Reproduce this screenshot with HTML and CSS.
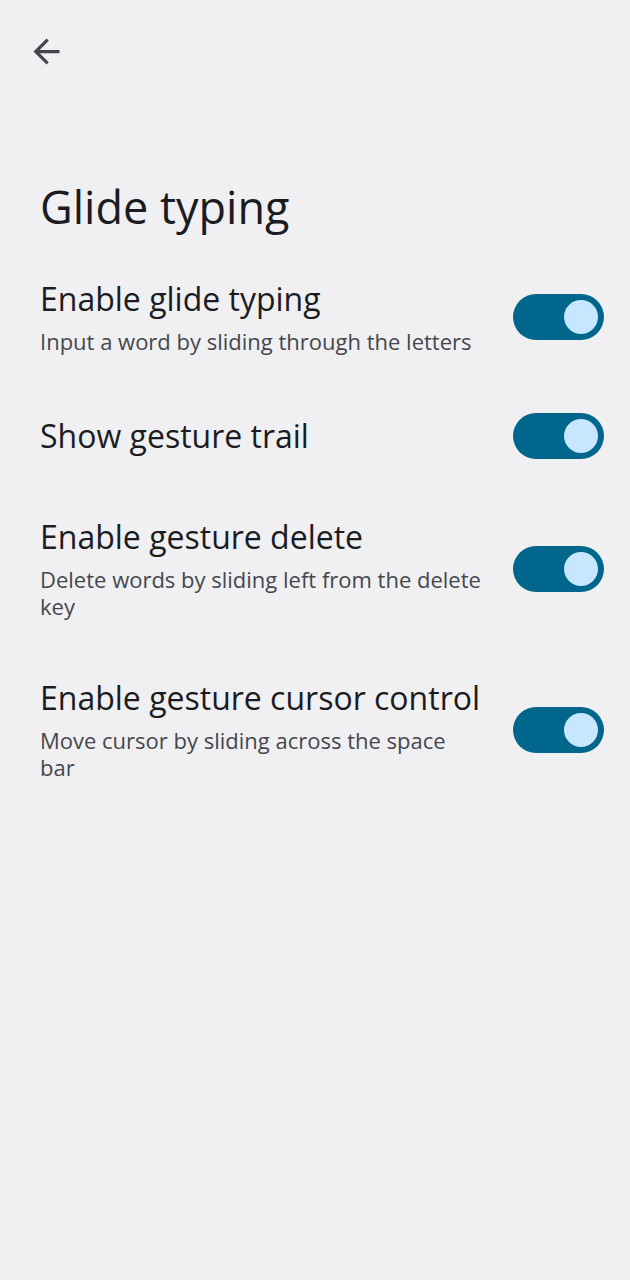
FILE: index.html
```html
<!DOCTYPE html>
<html>
<head>
<meta charset="utf-8">
<link rel="stylesheet" href="styles.css">
</head>
<body>
<div class="page">
  <div class="topbar">
    <button class="back" aria-label="Back">
      <svg viewBox="0 0 24 24" width="39" height="39"><path d="M20 11H7.83l5.59-5.59L12 4l-8 8 8 8 1.41-1.41L7.83 13H20v-2z" fill="#43464c"/></svg>
    </button>
  </div>
  <h1 class="title">Glide typing</h1>
  <div class="list">
    <div class="item">
      <div class="texts">
        <div class="item-title">Enable glide typing</div>
        <div class="item-summary">Input a word by sliding through the letters</div>
      </div>
      <div class="switch"><div class="thumb"></div></div>
    </div>
    <div class="item">
      <div class="texts">
        <div class="item-title">Show gesture trail</div>
      </div>
      <div class="switch"><div class="thumb"></div></div>
    </div>
    <div class="item">
      <div class="texts">
        <div class="item-title">Enable gesture delete</div>
        <div class="item-summary">Delete words by sliding left from the delete key</div>
      </div>
      <div class="switch"><div class="thumb"></div></div>
    </div>
    <div class="item">
      <div class="texts">
        <div class="item-title">Enable gesture cursor control</div>
        <div class="item-summary">Move cursor by sliding across the space bar</div>
      </div>
      <div class="switch"><div class="thumb"></div></div>
    </div>
  </div>
</div>
</body>
</html>
```
FILE: styles.css
```css
html, body {
  margin: 0;
  padding: 0;
  background: #f0f0f3;
}
.page {
  width: 630px;
  min-height: 1280px;
  font-family: "Open Sans", "Noto Sans", sans-serif;
  color: #1b1c1f;
}
.topbar {
  display: flex;
  padding: 32px 0 0 27px;
}
.back {
  background: none;
  border: 0;
  padding: 0;
  width: 39px;
  height: 39px;
  display: flex;
}
.title {
  margin: 108px 0 0 40px;
  font-size: 45px;
  font-weight: 400;
  line-height: 56px;
}
.list {
  display: flex;
  flex-direction: column;
  margin-top: 15px;
}
.item {
  display: flex;
  align-items: center;
  padding: 29px 26px 29px 40px;
  gap: 29px;
}
.texts {
  flex: 1;
  min-width: 0;
}
.item-title {
  font-size: 32px;
  line-height: 40px;
}
.item-summary {
  margin-top: 9px;
  font-size: 22px;
  line-height: 27px;
  color: #45474b;
}
.switch {
  width: 91px;
  height: 46px;
  border-radius: 23px;
  background: #00668b;
  display: flex;
  align-items: center;
  justify-content: flex-end;
  padding-right: 6px;
  box-sizing: border-box;
  flex: none;
}
.thumb {
  width: 34px;
  height: 34px;
  border-radius: 50%;
  background: #c6e7ff;
}
```
